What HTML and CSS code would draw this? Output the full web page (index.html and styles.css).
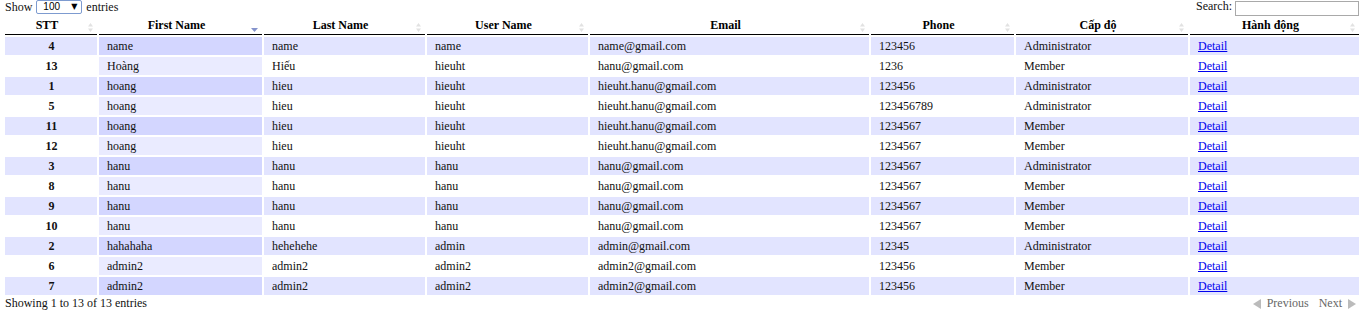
FILE: index.html
```html
<!DOCTYPE html>
<html>
<head>
<meta charset="utf-8">
<link rel="stylesheet" href="styles.css">
</head>
<body>
<div class="top">
  <label class="length">Show <span class="sel"><select class="sel-input"><option>100</option></select><span class="sel-arrow">▼</span></span> entries</label>
  <label class="search">Search: <input class="search-input" type="text"></label>
</div>
<table class="display">
  <colgroup>
    <col class="c1"><col class="c2"><col class="c3"><col class="c4"><col class="c5"><col class="c6"><col class="c7"><col class="c8">
  </colgroup>
  <thead>
    <tr>
      <th>STT<svg class="sort both" viewBox="0 0 5 9" width="5" height="9"><path d="M2.5 0L5 3.5H0z M2.5 9L5 5.5H0z"/></svg></th>
      <th>First Name<svg class="sort desc" viewBox="0 0 7 4" width="7" height="4"><path d="M0 0H7L3.5 4z"/></svg></th>
      <th>Last Name<svg class="sort both" viewBox="0 0 5 9" width="5" height="9"><path d="M2.5 0L5 3.5H0z M2.5 9L5 5.5H0z"/></svg></th>
      <th>User Name<svg class="sort both" viewBox="0 0 5 9" width="5" height="9"><path d="M2.5 0L5 3.5H0z M2.5 9L5 5.5H0z"/></svg></th>
      <th>Email<svg class="sort both" viewBox="0 0 5 9" width="5" height="9"><path d="M2.5 0L5 3.5H0z M2.5 9L5 5.5H0z"/></svg></th>
      <th>Phone<svg class="sort both" viewBox="0 0 5 9" width="5" height="9"><path d="M2.5 0L5 3.5H0z M2.5 9L5 5.5H0z"/></svg></th>
      <th>Cấp độ<svg class="sort both" viewBox="0 0 5 9" width="5" height="9"><path d="M2.5 0L5 3.5H0z M2.5 9L5 5.5H0z"/></svg></th>
      <th>Hành động<svg class="sort both" viewBox="0 0 5 9" width="5" height="9"><path d="M2.5 0L5 3.5H0z M2.5 9L5 5.5H0z"/></svg></th>
    </tr>
  </thead>
  <tbody>
    <tr class="odd"><td class="stt">4</td><td class="sorted">name</td><td>name</td><td>name</td><td>name@gmail.com</td><td>123456</td><td>Administrator</td><td><a href="#">Detail</a></td></tr>
    <tr class="even"><td class="stt">13</td><td class="sorted">Hoàng</td><td>Hiếu</td><td>hieuht</td><td>hanu@gmail.com</td><td>1236</td><td>Member</td><td><a href="#">Detail</a></td></tr>
    <tr class="odd"><td class="stt">1</td><td class="sorted">hoang</td><td>hieu</td><td>hieuht</td><td>hieuht.hanu@gmail.com</td><td>123456</td><td>Administrator</td><td><a href="#">Detail</a></td></tr>
    <tr class="even"><td class="stt">5</td><td class="sorted">hoang</td><td>hieu</td><td>hieuht</td><td>hieuht.hanu@gmail.com</td><td>123456789</td><td>Administrator</td><td><a href="#">Detail</a></td></tr>
    <tr class="odd"><td class="stt">11</td><td class="sorted">hoang</td><td>hieu</td><td>hieuht</td><td>hieuht.hanu@gmail.com</td><td>1234567</td><td>Member</td><td><a href="#">Detail</a></td></tr>
    <tr class="even"><td class="stt">12</td><td class="sorted">hoang</td><td>hieu</td><td>hieuht</td><td>hieuht.hanu@gmail.com</td><td>1234567</td><td>Member</td><td><a href="#">Detail</a></td></tr>
    <tr class="odd"><td class="stt">3</td><td class="sorted">hanu</td><td>hanu</td><td>hanu</td><td>hanu@gmail.com</td><td>1234567</td><td>Administrator</td><td><a href="#">Detail</a></td></tr>
    <tr class="even"><td class="stt">8</td><td class="sorted">hanu</td><td>hanu</td><td>hanu</td><td>hanu@gmail.com</td><td>1234567</td><td>Member</td><td><a href="#">Detail</a></td></tr>
    <tr class="odd"><td class="stt">9</td><td class="sorted">hanu</td><td>hanu</td><td>hanu</td><td>hanu@gmail.com</td><td>1234567</td><td>Member</td><td><a href="#">Detail</a></td></tr>
    <tr class="even"><td class="stt">10</td><td class="sorted">hanu</td><td>hanu</td><td>hanu</td><td>hanu@gmail.com</td><td>1234567</td><td>Member</td><td><a href="#">Detail</a></td></tr>
    <tr class="odd"><td class="stt">2</td><td class="sorted">hahahaha</td><td>hehehehe</td><td>admin</td><td>admin@gmail.com</td><td>12345</td><td>Administrator</td><td><a href="#">Detail</a></td></tr>
    <tr class="even"><td class="stt">6</td><td class="sorted">admin2</td><td>admin2</td><td>admin2</td><td>admin2@gmail.com</td><td>123456</td><td>Member</td><td><a href="#">Detail</a></td></tr>
    <tr class="odd"><td class="stt">7</td><td class="sorted">admin2</td><td>admin2</td><td>admin2</td><td>admin2@gmail.com</td><td>123456</td><td>Member</td><td><a href="#">Detail</a></td></tr>
  </tbody>
</table>
<div class="bottom">
  <div class="info">Showing 1 to 13 of 13 entries</div>
  <div class="paginate">
    <span class="pg prev"><svg class="pg-arrow" viewBox="0 0 8 10" width="8" height="10"><path d="M0 5L8 0V10z"/></svg>Previous</span>
    <span class="pg next">Next<svg class="pg-arrow" viewBox="0 0 8 10" width="8" height="10"><path d="M8 5L0 0V10z"/></svg></span>
  </div>
</div>
</body>
</html>
```

FILE: styles.css
```css
html, body {
  margin: 0;
  padding: 0;
}
body {
  margin: 0 5px;
  font-family: "Liberation Serif", "Times New Roman", serif;
  font-size: 12px;
  color: #111;
  background: #fff;
}
.top {
  display: flex;
  justify-content: space-between;
  align-items: flex-start;
  height: 14px;
}
.length {
  display: flex;
  align-items: center;
  gap: 4px;
  line-height: 13px;
}
.sel {
  position: relative;
  display: inline-block;
  width: 46px;
  height: 14px;
}
.sel-input {
  appearance: none;
  -webkit-appearance: none;
  box-sizing: border-box;
  width: 46px;
  height: 14px;
  margin: 0;
  padding: 0 0 0 6px;
  border: 1px solid #7d9bd0;
  border-radius: 2px;
  background: #fff;
  font-family: "Liberation Sans", Arial, sans-serif;
  font-size: 10px;
  line-height: 12px;
  color: #000;
}
.sel-arrow {
  position: absolute;
  right: 5px;
  top: 2px;
  font-family: "DejaVu Sans", sans-serif;
  font-size: 8px;
  line-height: 10px;
  color: #000;
  pointer-events: none;
}
.search {
  display: flex;
  align-items: flex-start;
  gap: 3px;
  line-height: 13px;
}
.search-input {
  box-sizing: border-box;
  width: 124px;
  height: 15px;
  margin: 1px 0 0 0;
  padding: 0;
  border: 1px solid #a9a9a9;
  background: #fff;
}
table.display {
  table-layout: fixed;
  border-collapse: separate;
  border-spacing: 2px;
  margin: 0 -2px;
  width: calc(100% + 4px);
}
.c1 { width: 92px; }
.c2 { width: 163px; }
.c3 { width: 161px; }
.c4 { width: 161px; }
.c5 { width: 279px; }
.c6 { width: 143px; }
.c7 { width: 172px; }
.c8 { width: 169px; }
table.display th {
  position: relative;
  padding: 3px 18px 2px 10px;
  border-bottom: 1px solid #000;
  font-weight: bold;
  line-height: 13px;
  text-align: center;
  color: #000;
}
.sort {
  position: absolute;
  right: 4px;
}
.sort.both {
  top: 7px;
  fill: #e2e2e2;
}
.sort.desc {
  top: 12px;
  right: 4px;
  fill: #8593cc;
}
table.display td {
  padding: 3px 7px 3px 8px;
  line-height: 12px;
  white-space: nowrap;
  overflow: hidden;
  color: #111;
}
tr.odd td { background: #e2e4ff; }
tr.odd td.sorted { background: #d3d6ff; }
tr.even td { background: #fff; }
tr.even td.sorted { background: #eaebff; }
td.stt {
  text-align: center;
  font-weight: bold;
}
table.display td a {
  color: #0000ee;
  text-decoration: underline;
}
.bottom {
  display: flex;
  justify-content: space-between;
  align-items: flex-start;
  line-height: 13px;
}
.paginate {
  display: flex;
  gap: 10px;
  padding-right: 3px;
  color: #666;
}
.pg {
  display: flex;
  align-items: center;
  gap: 6px;
}
.pg-arrow {
  fill: #bbbbbb;
}
```
